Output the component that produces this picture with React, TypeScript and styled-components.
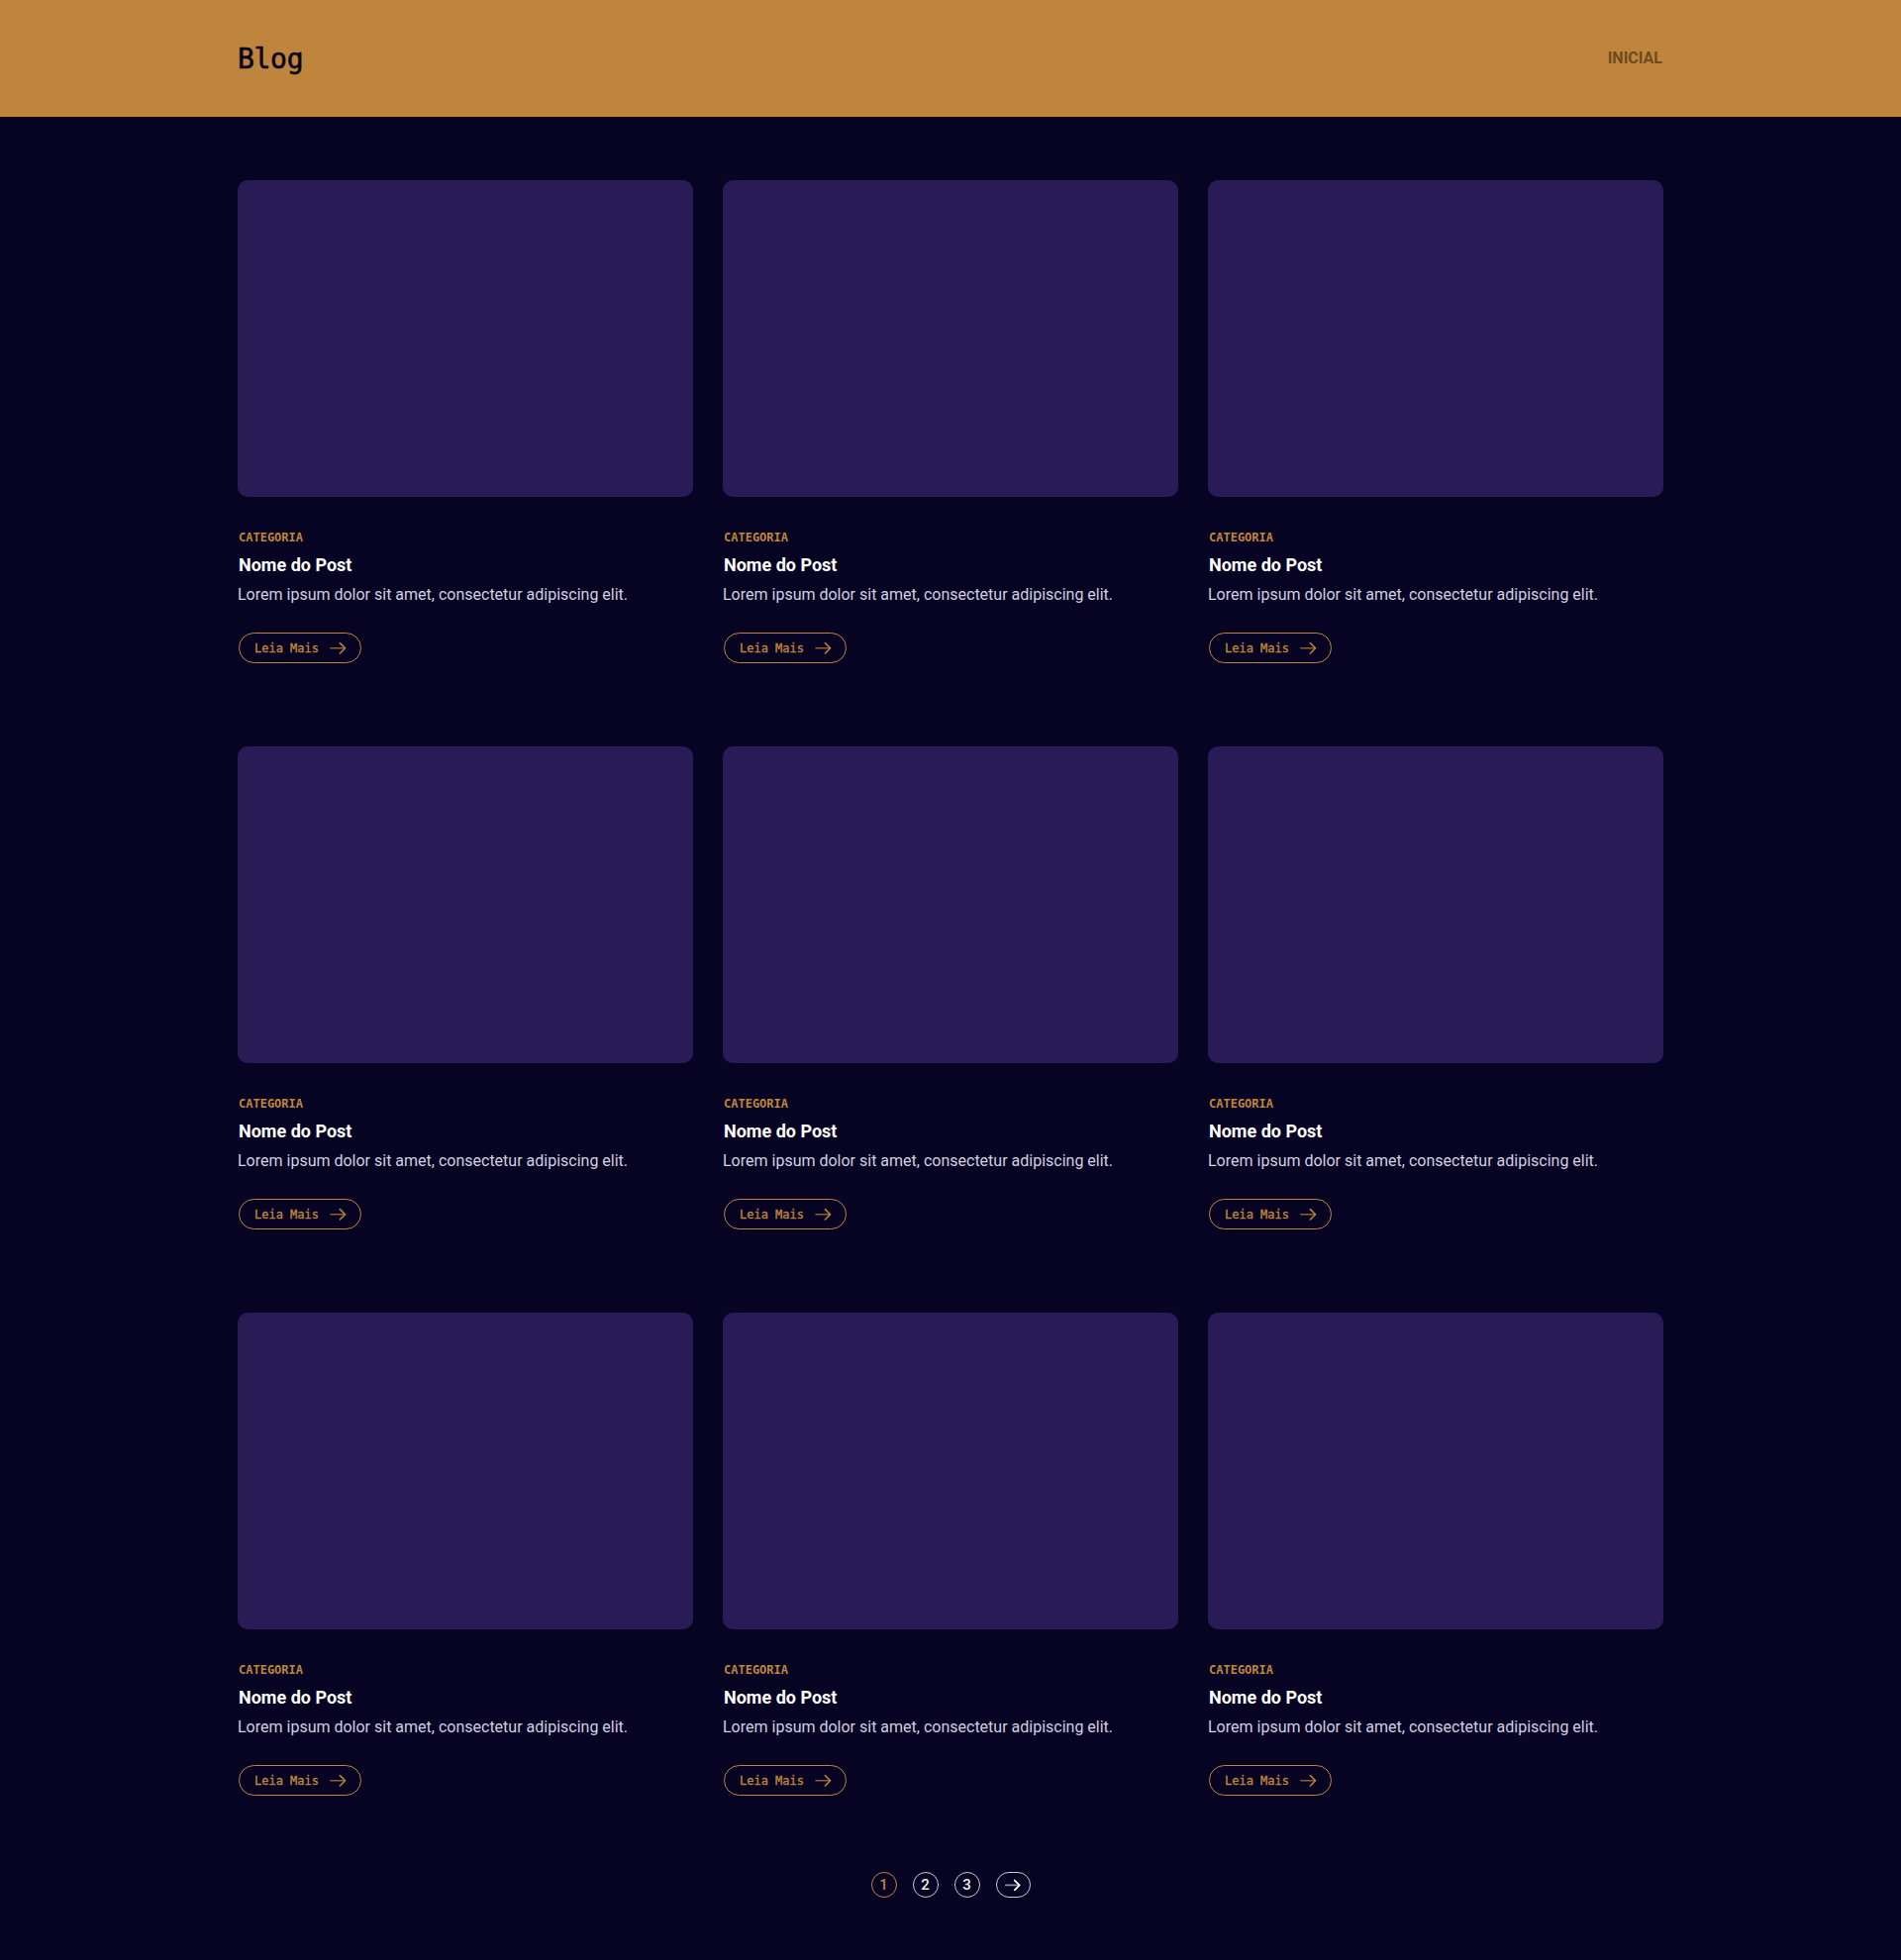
import styled, { createGlobalStyle } from 'styled-components';
import React from 'react';

const GlobalStyle = createGlobalStyle`
  * { box-sizing: border-box; }
  body {
    margin: 0;
    background: #070322;
    font-family: Roboto, "Liberation Sans", sans-serif;
  }
`;

const gold = '#bf853d';
const mono = `"DejaVu Sans Mono", "Liberation Mono", monospace`;

const Header = styled.header`
  background: ${gold};
  height: 118px;
`;

const Container = styled.div`
  width: 1440px;
  margin: 0 auto;
`;

const HeaderInner = styled(Container)`
  height: 100%;
  display: flex;
  align-items: center;
  justify-content: space-between;
`;

const Logo = styled.h1`
  margin: 0;
  font-family: ${mono};
  font-size: 28px;
  font-weight: 400;
  -webkit-text-stroke: 0.6px #0a0420;
  color: #0a0420;
  letter-spacing: -0.3px;
`;

const NavLink = styled.a`
  font-family: Roboto, sans-serif;
  font-size: 16px;
  font-weight: 700;
  color: #6d4a1f;
  text-decoration: none;
  margin-top: -2px;
  margin-right: 1px;
`;

const Main = styled.main`
  padding: 64px 0 64px;
`;

const Grid = styled(Container)`
  display: grid;
  grid-template-columns: repeat(3, 460px);
  column-gap: 30px;
  row-gap: 84px;
`;

const Card = styled.article`
  display: flex;
  flex-direction: column;
  align-items: flex-start;
`;

const Thumb = styled.div`
  width: 100%;
  height: 320px;
  background: #281b56;
  border-radius: 10px;
`;

const Category = styled.span`
  margin-top: 33px;
  font-family: ${mono};
  font-size: 12px;
  line-height: 16px;
  font-weight: 700;
  color: ${gold};
  padding-left: 1px;
`;

const Title = styled.h2`
  margin: 8px 0 0;
  font-size: 18px;
  line-height: 24px;
  font-weight: 700;
  color: #ffffff;
  padding-left: 1px;
`;

const Excerpt = styled.p`
  margin: 6px 0 0;
  font-size: 16px;
  line-height: 24px;
  color: #d2cfe0;
`;

const ReadMore = styled.a`
  margin-top: 26px;
  margin-left: 1px;
  height: 31px;
  padding: 0 14px 0 15px;
  display: inline-flex;
  align-items: center;
  gap: 11px;
  border: 1.5px solid ${gold};
  border-radius: 999px;
  font-family: ${mono};
  font-size: 12px;
  -webkit-text-stroke: 0.35px ${gold};
  color: ${gold};
  text-decoration: none;
`;

const Pagination = styled.nav`
  margin-top: 77px;
  display: flex;
  justify-content: center;
  gap: 16px;
`;

const PageButton = styled.button<{ $active?: boolean; $wide?: boolean }>`
  width: ${p => (p.$wide ? '35px' : '26px')};
  height: 26px;
  padding: 0;
  border-radius: 999px;
  border: 1.5px solid ${p => (p.$active ? gold : '#cbc8d6')};
  background: transparent;
  color: ${p => (p.$active ? gold : '#ecebf3')};
  font-family: Roboto, sans-serif;
  font-size: 15px;
  font-weight: 500;
  display: flex;
  align-items: center;
  justify-content: center;
  cursor: pointer;
`;

const Arrow: React.FC<{ color: string; shaft: string; size?: number; weight?: number }> = ({ color, shaft, size = 17, weight = 1.6 }) => (
  <svg width={size} height={size * 0.8} viewBox="0 0 18 14" fill="none" strokeWidth={weight} strokeLinecap="round" strokeLinejoin="round">
    <path d="M1 7h15" stroke={shaft} />
    <path d="M11 1.5 16.5 7 11 12.5" stroke={color} />
  </svg>
);

const posts = Array.from({ length: 9 }, (_, i) => i);

const App: React.FC = () => {
  return (
    <>
      <GlobalStyle />
      <Header>
        <HeaderInner>
          <Logo>Blog</Logo>
          <NavLink href="#">INICIAL</NavLink>
        </HeaderInner>
      </Header>
      <Main>
        <Grid>
          {posts.map(i => (
            <Card key={i}>
              <Thumb />
              <Category>CATEGORIA</Category>
              <Title>Nome do Post</Title>
              <Excerpt>Lorem ipsum dolor sit amet, consectetur adipiscing elit.</Excerpt>
              <ReadMore href="#">
                Leia Mais
                <Arrow color={gold} shaft="#8a6233" />
              </ReadMore>
            </Card>
          ))}
        </Grid>
        <Pagination>
          <PageButton $active>1</PageButton>
          <PageButton>2</PageButton>
          <PageButton>3</PageButton>
          <PageButton $wide>
            <Arrow color="#ffffff" shaft="#8d8aa0" size={16} weight={2} />
          </PageButton>
        </Pagination>
      </Main>
    </>
  );
};

export default App;
